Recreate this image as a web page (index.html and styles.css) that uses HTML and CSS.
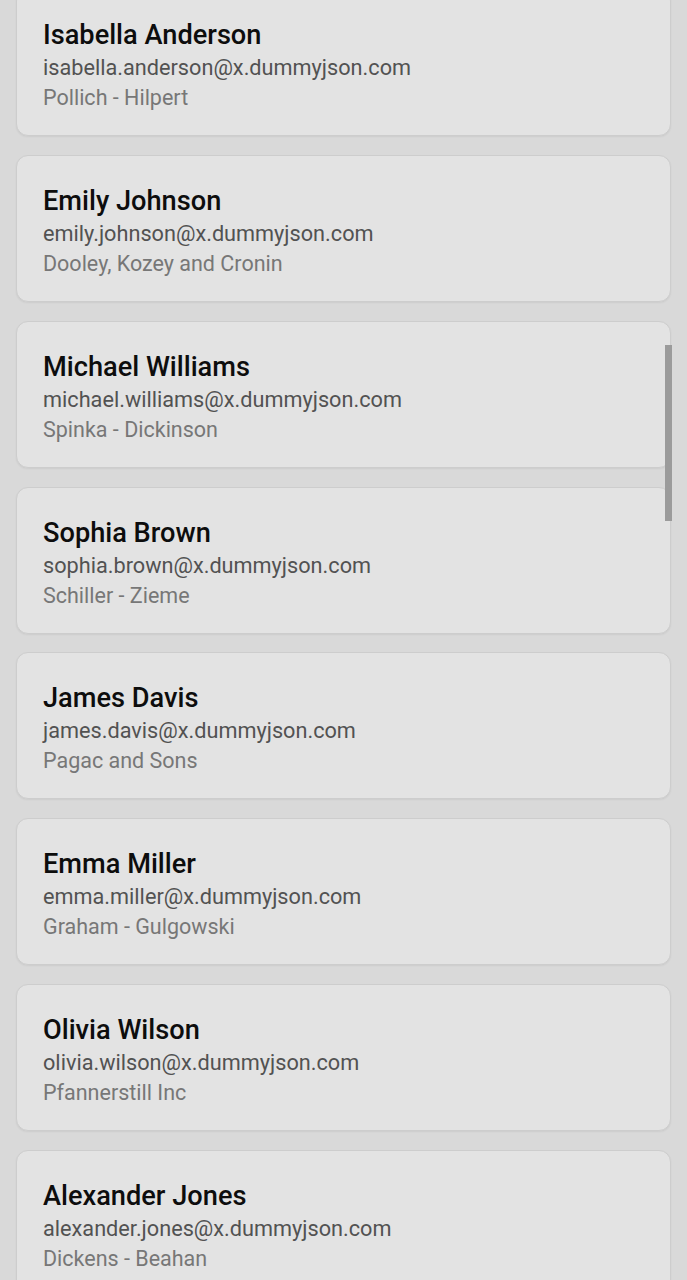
FILE: index.html
```html
<!DOCTYPE html>
<html lang="en">
<head>
<meta charset="utf-8">
<title>Users</title>
<link rel="stylesheet" href="styles.css">
</head>
<body>
<main class="list">
  <article class="card"><h2 class="name">Isabella Anderson</h2><p class="email">isabella.anderson@x.dummyjson.com</p><p class="company">Pollich - Hilpert</p></article>
  <article class="card"><h2 class="name">Emily Johnson</h2><p class="email">emily.johnson@x.dummyjson.com</p><p class="company">Dooley, Kozey and Cronin</p></article>
  <article class="card"><h2 class="name">Michael Williams</h2><p class="email">michael.williams@x.dummyjson.com</p><p class="company">Spinka - Dickinson</p></article>
  <article class="card"><h2 class="name">Sophia Brown</h2><p class="email">sophia.brown@x.dummyjson.com</p><p class="company">Schiller - Zieme</p></article>
  <article class="card"><h2 class="name">James Davis</h2><p class="email">james.davis@x.dummyjson.com</p><p class="company">Pagac and Sons</p></article>
  <article class="card"><h2 class="name">Emma Miller</h2><p class="email">emma.miller@x.dummyjson.com</p><p class="company">Graham - Gulgowski</p></article>
  <article class="card"><h2 class="name">Olivia Wilson</h2><p class="email">olivia.wilson@x.dummyjson.com</p><p class="company">Pfannerstill Inc</p></article>
  <article class="card"><h2 class="name">Alexander Jones</h2><p class="email">alexander.jones@x.dummyjson.com</p><p class="company">Dickens - Beahan</p></article>
</main>
<div class="scrollbar"></div>
</body>
</html>
```
FILE: styles.css
```css
html, body {
  margin: 0;
  padding: 0;
  background: #d9d9d9;
  font-family: Roboto, "Noto Sans", sans-serif;
  overflow: hidden;
  height: 1280px;
}
.list {
  display: flex;
  flex-direction: column;
  gap: 18.83px;
  padding: 0 16px;
  margin-top: -10.83px;
}
.card {
  box-sizing: border-box;
  height: 147px;
  background: #e3e3e3;
  border: 1px solid #cdcdcd;
  border-radius: 12px;
  padding: 27px 26px 0;
  display: flex;
  flex-direction: column;
  box-shadow: 0 1px 2px rgba(0,0,0,0.06);
}
.name {
  margin: 0;
  font-size: 27.2px;
  font-weight: 500;
  color: #0d0d0d;
  line-height: 36px;
}
.email {
  margin: 0;
  font-size: 21.7px;
  color: #525252;
  line-height: 30px;
}
.company {
  margin: 0;
  font-size: 21.5px;
  color: #777;
  line-height: 30px;
}
.scrollbar {
  position: absolute;
  left: 665px;
  top: 345px;
  width: 7px;
  height: 176px;
  background: #9b9b9b;
}
```
